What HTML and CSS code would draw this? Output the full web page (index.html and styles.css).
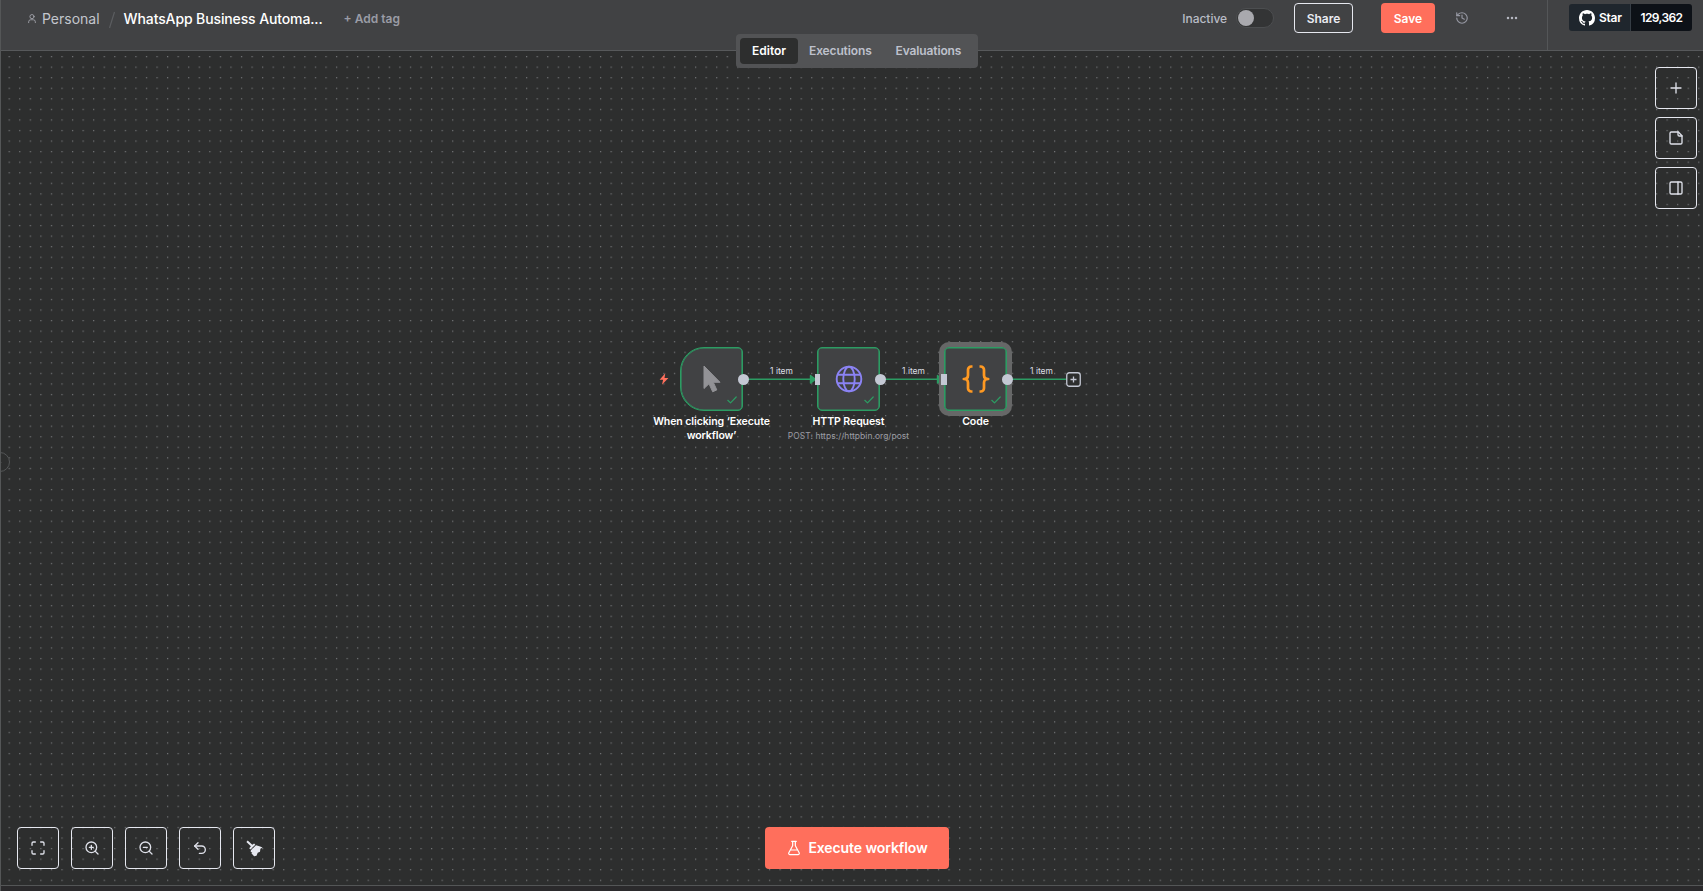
FILE: index.html
```html
<!DOCTYPE html>
<html lang="en">
<head>
<meta charset="utf-8">
<title>WhatsApp Business Automation</title>
<link rel="stylesheet" href="styles.css">
</head>
<body>
<div class="app">
  <header class="header">
    <div class="crumbs">
      <svg class="ic user" viewBox="0 0 24 24"><circle cx="12" cy="7.5" r="5"/><path d="M4 22v-2a5 5 0 0 1 5-5h6a5 5 0 0 1 5 5v2"/></svg>
      <span class="project">Personal</span>
      <svg class="slash" viewBox="0 0 8 18"><path d="M6.5 1 1.5 17"/></svg>
      <span class="title">WhatsApp Business Automa...</span>
      <span class="tag">+ Add tag</span>
    </div>
    <div class="actions">
      <span class="state">Inactive</span>
      <span class="toggle"><span class="knob"></span></span>
      <button class="btn share">Share</button>
      <button class="btn save">Save</button>
      <svg class="ic history" viewBox="0 0 24 24"><path d="M3 12a9 9 0 1 0 9-9 9.75 9.75 0 0 0-6.74 2.74L3 8"/><path d="M3 3v5h5"/><path d="M12 7v5l4 2"/></svg>
      <svg class="more" viewBox="0 0 12 4"><circle cx="2" cy="2" r="1.25"/><circle cx="6" cy="2" r="1.25"/><circle cx="10" cy="2" r="1.25"/></svg>
      <div class="github">
        <div class="star">
          <span class="star-label"><svg viewBox="0 0 16 16"><path d="M8 0c4.42 0 8 3.58 8 8a8.013 8.013 0 0 1-5.45 7.59c-.4.08-.55-.17-.55-.38 0-.27.01-1.13.01-2.2 0-.75-.25-1.23-.54-1.48 1.78-.2 3.65-.88 3.65-3.95 0-.88-.31-1.59-.82-2.15.08-.2.36-1.02-.08-2.12 0 0-.67-.22-2.2.82-.64-.18-1.32-.27-2-.27-.68 0-1.36.09-2 .27-1.53-1.03-2.2-.82-2.2-.82-.44 1.1-.16 1.92-.08 2.12-.51.56-.82 1.28-.82 2.15 0 3.06 1.86 3.75 3.64 3.95-.23.2-.44.55-.51 1.07-.46.21-1.61.55-2.33-.66-.15-.24-.6-.83-1.23-.82-.67.01-.27.38.01.53.34.19.73.9.82 1.13.16.45.68 1.31 2.69.94 0 .67.01 1.3.01 1.49 0 .21-.15.45-.55.38A7.995 7.995 0 0 1 0 8c0-4.42 3.58-8 8-8Z"/></svg>Star</span>
          <span class="star-count">129,362</span>
        </div>
      </div>
    </div>
    <nav class="tabs">
      <span class="tab active">Editor</span><span class="tab">Executions</span><span class="tab">Evaluations</span>
    </nav>
  </header>

  <main class="canvas">
    <svg class="grid">
      <defs><pattern id="dots" x="7.6" y="5" width="10.56" height="10.56" patternUnits="userSpaceOnUse"><circle cx=".66" cy=".66" r=".62" fill="#85878a"/></pattern></defs>
      <rect width="100%" height="100%" fill="url(#dots)"/>
    </svg>

    <svg class="edges" viewBox="0 0 420 80">
      <g class="wire"><path d="M85 39.3h66M222 39.3h56M349 39.3h56"/></g>
      <g class="arrow"><path d="M149.500 35.500l5 3.800-5 3.800zM276.500 35.500l5 3.800-5 3.800z"/></g>
    </svg>
    <span class="items items-a">1 item</span>
    <span class="items items-b">1 item</span>
    <span class="items items-c">1 item</span>

    <svg class="bolt" viewBox="0 0 10 12"><path d="M6.300.3.600 6.700h3.500L3 11.700l6.400-6.800H5.500z"/></svg>

    <section class="node trigger">
      <div class="box">
        <svg class="cursor" viewBox="0 0 18 28"><path d="M1 1v22.500l5-4.700 3.700 8 4.100-1.900-3.500-7.600H17z"/></svg>
        <svg class="check" viewBox="0 0 10 8"><path d="m.8 4.300 2.700 2.600L9.200 1"/></svg>
        <i class="out"></i>
      </div>
      <div class="name">When clicking ‘Execute<br>workflow’</div>
    </section>

    <section class="node http">
      <div class="box">
        <svg class="globe" viewBox="0 0 28 28"><circle cx="14" cy="14" r="12.300"/><ellipse cx="14" cy="14" rx="5.700" ry="12.300"/><path d="M2.500 9.700h23M2.500 18.300h23"/></svg>
        <svg class="check" viewBox="0 0 10 8"><path d="m.8 4.300 2.700 2.600L9.200 1"/></svg>
        <i class="in"></i><i class="out"></i>
      </div>
      <div class="name">HTTP Request</div>
      <div class="sub">POST: https://httpbin.org/post</div>
    </section>

    <section class="node code">
      <div class="box">
        <svg class="braces" viewBox="0 0 26 28"><path d="M9.500 1.500H8.300a3.300 3.300 0 0 0-3.300 3.300v5.400Q5 14 .8 14 5 14 5 17.800v5.400a3.300 3.300 0 0 0 3.300 3.300h1.200M16.500 1.500h1.200A3.300 3.300 0 0 1 21 4.800v5.400q0 3.800 4.200 3.800-4.200 0-4.200 3.800v5.400a3.300 3.300 0 0 1-3.300 3.300h-1.200"/></svg>
        <svg class="check" viewBox="0 0 10 8"><path d="m.8 4.300 2.700 2.600L9.200 1"/></svg>
        <i class="in"></i><i class="out"></i>
      </div>
      <div class="name">Code</div>
    </section>

    <svg class="add-next" viewBox="0 0 15 15"><rect x=".75" y=".75" width="13.500" height="13.500" rx="2.500"/><path d="M7.500 4.500v6M4.500 7.500h6"/></svg>

    <div class="side">
      <button class="sq"><svg class="ic" viewBox="0 0 24 24"><path d="M4.500 12h15M12 4.500v15"/></svg></button>
      <button class="sq"><svg class="ic" viewBox="0 0 24 24"><path d="M15.500 3H5a2 2 0 0 0-2 2v14a2 2 0 0 0 2 2h14a2 2 0 0 0 2-2V8.500z"/><path d="M15 3v4a2 2 0 0 0 2 2h4"/></svg></button>
      <button class="sq"><svg class="ic" viewBox="0 0 24 24"><rect x="3" y="3" width="18" height="18" rx="2"/><path d="M15 3v18"/></svg></button>
    </div>

    <div class="controls">
      <button class="sq"><svg class="ic" viewBox="0 0 24 24"><path d="M8 3H5a2 2 0 0 0-2 2v3M21 8V5a2 2 0 0 0-2-2h-3M3 16v3a2 2 0 0 0 2 2h3M16 21h3a2 2 0 0 0 2-2v-3"/></svg></button>
      <button class="sq"><svg class="ic" viewBox="0 0 24 24"><circle cx="11" cy="11" r="8"/><path d="m21 21-4.350-4.350M11 8v6M8 11h6"/></svg></button>
      <button class="sq"><svg class="ic" viewBox="0 0 24 24"><circle cx="11" cy="11" r="8"/><path d="m21 21-4.350-4.350M8 11h6"/></svg></button>
      <button class="sq"><svg class="ic" viewBox="0 0 24 24"><path d="M9 14 4 9l5-5"/><path d="M4 9h10.500a5.500 5.500 0 0 1 0 11H11"/></svg></button>
      <button class="sq"><svg class="broom" viewBox="0 0 17 17"><path d="M.4 1.900 1.700.5l4.600 4.300L8.100 3.500 9.300 4.700 4.400 9.500 3.200 8.300 4.900 6.300zM10 5.200l3.400 1.100 3.200 1.200-2.200 1.300-.4 3-2.300.9-1.200 3.100-2.400.4-2.700-2.900.9-.9-1.600-.4L4.900 10.200z"/></svg></button>
    </div>

    <button class="execute"><svg class="ic flask" viewBox="0 0 24 24"><path d="M14 2v6a2 2 0 0 0 .245.960l5.510 10.080A2 2 0 0 1 18 22H6a2 2 0 0 1-1.755-2.960l5.510-10.080A2 2 0 0 0 10 8V2M6.450 15h11.100M8.500 2h7"/></svg><span class="execute-label">Execute workflow</span></button>
    <span class="collapse"><svg viewBox="0 0 6 8"><path d="m1.500 1 3 3-3 3"/></svg></span>
  </main>
  <footer class="logs"></footer>
</div>
</body>
</html>
```
FILE: styles.css
```css
* { box-sizing: border-box; }
body { margin: 0; background: #2d2e2e; font-family: Inter, "Open Sans", sans-serif; overflow: hidden; }
button { font-family: inherit; padding: 0; margin: 0; }
svg { display: block; flex: none; overflow: visible; }
.ic { fill: none; stroke: currentColor; stroke-width: 2; stroke-linecap: round; stroke-linejoin: round; }

.app { display: flex; flex-direction: column; width: 1703px; height: 891px; border-left: 1px solid #545657; }

.header { position: relative; z-index: 2; display: flex; justify-content: space-between; flex: none; height: 51px; background: #414244; border-bottom: 1px solid #57595b; }
.crumbs { display: flex; align-items: center; height: 37px; padding-left: 26px; white-space: nowrap; }
.user { width: 10px; height: 11px; color: #a9abb3; }
.project { margin-left: 5px; font-size: 14px; color: #c3c6cd; }
.slash { width: 8px; height: 18px; margin: 2px 9px 0 8px; fill: none; stroke: #5c5e61; stroke-width: 1.2; }
.title { width: 201px; margin-left: -1px; font-size: 14px; font-weight: 500; letter-spacing: -.12px; color: #fff; }
.tag { margin-left: 19px; font-size: 12px; font-weight: 600; color: #9a9ca6; }

.actions { display: flex; align-items: center; height: 36px; white-space: nowrap; }
.state { padding-top: 1px; font-size: 12px; font-weight: 500; letter-spacing: -.05px; color: #b9bcc6; }
.toggle { width: 38px; height: 20px; margin-left: 9px; padding: 1px; border: 1px solid #4c4e50; border-radius: 10px; background: #333435; }
.knob { display: block; width: 16px; height: 16px; border-radius: 50%; background: #a9a9ae; }
.btn { height: 30px; border-radius: 4px; font-size: 12px; font-weight: 600; }
.share { width: 59px; margin-left: 20px; border: 1px solid #e6e8f0; background: transparent; color: #e9ebf2; }
.save { width: 54px; margin-left: 28px; border: 0; background: #ff6f5c; color: #fff; }
.history { width: 14px; height: 14px; margin-left: 20px; color: #9698a3; }
.more { width: 12px; height: 4px; margin-left: 37px; fill: #b6b8c2; }
.github { align-self: flex-start; display: flex; width: 156px; height: 50px; margin-left: 29px; padding: 4px 0 0 21px; border-left: 1px solid #545658; }
.star { display: flex; flex: none; height: 27px; border-radius: 3px; overflow: hidden; color: #fff; font-size: 12px; font-weight: 600; }
.star-label { display: flex; align-items: center; gap: 4px; width: 62px; padding-left: 10px; background: #1f262d; border-right: 1px solid #363d45; letter-spacing: -.25px; }
.star-label svg { width: 16px; height: 16px; fill: #fff; }
.star-count { display: flex; align-items: center; justify-content: center; width: 61px; background: #0d1117; letter-spacing: -.6px; }

.tabs { position: absolute; left: 735px; top: 34px; display: flex; width: 242px; height: 34px; padding: 4px; border-radius: 4px; background: #525355; }
.tab { display: flex; align-items: center; padding: 0 12px 2px; border-radius: 4px; font-size: 12px; font-weight: 600; letter-spacing: -.13px; color: #bec1cc; }
.tab.active { width: 58px; background: #2d2e2e; color: #fff; letter-spacing: 0; }
.tab.active + .tab { padding-left: 11px; }

.canvas { position: relative; flex: 1; overflow: hidden; background: #2d2e2e; }
.grid { position: absolute; inset: 0; width: 100%; height: 100%; }
.edges { position: absolute; left: 660px; top: 288.700px; width: 420px; height: 80px; }
.wire { fill: none; stroke: #2c9c63; stroke-width: 1.6; }
.arrow { fill: #2c9c63; stroke: #2c9c63; stroke-width: 1.4; stroke-linejoin: round; }
.items { position: absolute; top: 314px; width: 42px; font-size: 8.450px; line-height: 12px; text-align: center; color: #dcdee5; }
.items-a { left: 759.500px; }
.items-b { left: 891.500px; }
.items-c { left: 1019.500px; }
.bolt { position: absolute; left: 658px; top: 322px; width: 10px; height: 12px; fill: #ff6f5c; }

.node { position: absolute; top: 296px; display: flex; flex-direction: column; align-items: center; width: 63px; }
.trigger { left: 679px; }
.http { left: 816px; }
.code { left: 943px; }
.box { position: relative; display: flex; align-items: center; justify-content: center; flex: none; width: 63px; height: 64px; border: 1px solid #2c9c63; border-radius: 5px; background: #414244; box-shadow: inset 0 0 0 .6px #2c9c63; }
.trigger .box { border-radius: 24px 5px 5px 24px; }
.code .box { box-shadow: inset 0 0 0 .6px #2c9c63, 0 0 0 5px #666767; }
.box .check { position: absolute; right: 5px; bottom: 6px; width: 10px; height: 8px; fill: none; stroke: #2c9c63; stroke-width: 1.2; stroke-linecap: round; stroke-linejoin: round; }
.out { position: absolute; right: -7px; top: 26px; width: 11px; height: 11px; border-radius: 50%; background: #c4c8d4; }
.in { position: absolute; left: -3px; top: 26px; width: 5px; height: 11px; background: #c4c8d4; }
.code .in { left: -4px; width: 6px; }
.cursor { width: 18px; height: 28px; fill: #929296; stroke: #929296; stroke-width: 1; stroke-linejoin: round; }
.globe { width: 28px; height: 28px; fill: none; stroke: #8b83f4; stroke-width: 1.900; }
.braces { width: 26px; height: 28px; fill: none; stroke: #ff9922; stroke-width: 2.700; stroke-linejoin: round; }
.name { margin-top: 4px; font-size: 10.56px; line-height: 14px; font-weight: 600; letter-spacing: -.1px; text-align: center; white-space: nowrap; color: #fff; }
.sub { margin-top: 1px; font-size: 8.450px; letter-spacing: .06px; line-height: 13px; white-space: nowrap; color: #9c9da4; }
.add-next { position: absolute; left: 1065px; top: 320.500px; width: 15px; height: 15px; fill: #2d2e2e; stroke: #c4c8d4; stroke-width: 1.300; }

.sq { display: flex; align-items: center; justify-content: center; width: 42px; height: 42px; border: 1px solid #e6e8f0; border-radius: 4px; background: transparent; color: #dfe1ea; }
.sq .ic { width: 16px; height: 16px; }
.side { position: absolute; right: 6px; top: 16px; display: flex; flex-direction: column; gap: 8px; }
.controls { position: absolute; left: 16px; bottom: 16px; display: flex; gap: 12px; }
.broom { width: 17px; height: 17px; fill: #e6e8f0; }
.execute { position: absolute; left: 764px; bottom: 16px; display: flex; align-items: center; justify-content: center; width: 184px; height: 42px; gap: 6px; border: 0; border-radius: 4px; background: #ff6f5c; color: #fff; font-size: 14px; font-weight: 600; letter-spacing: -.1px; }
.execute-label { padding-bottom: 1px; }
.flask { width: 16px; height: 16px; stroke-width: 1.800; }
.collapse { position: absolute; left: -11px; top: 401px; display: flex; align-items: center; justify-content: flex-end; width: 20px; height: 20px; padding-right: 7px; border: 1px solid #545657; border-radius: 50%; background: #2d2e2e; }
.collapse svg { width: 5px; height: 7px; fill: none; stroke: #85878a; }
.logs { flex: none; height: 6px; border-top: 1px solid #545657; background: #2b2a2c; }
```
